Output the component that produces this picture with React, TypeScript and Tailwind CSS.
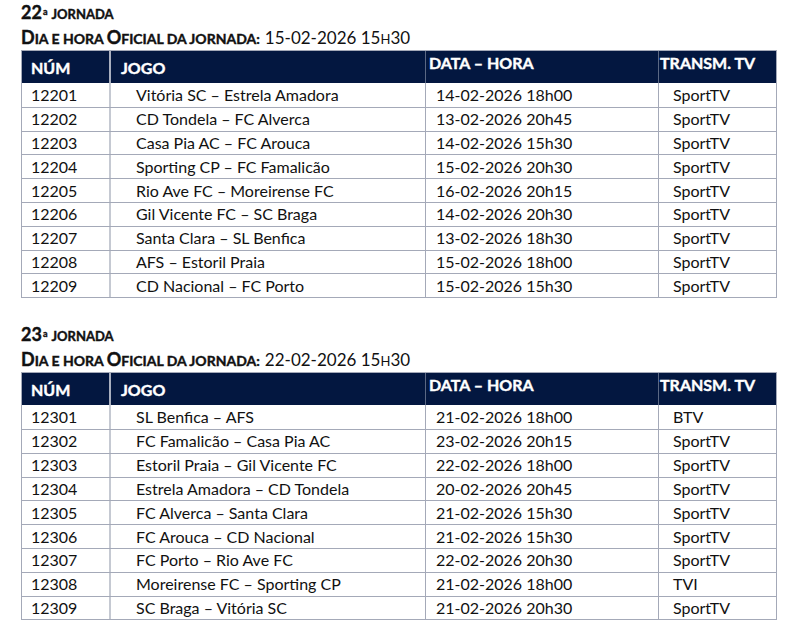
import React from "react";

type Jogo = { num: string; jogo: string; data: string; tv: string };

const jornadas: { n: string; dia: string; hora: string; jogos: Jogo[] }[] = [
  {
    n: "22",
    dia: "15-02-2026",
    hora: "30",
    jogos: [
      { num: "12201", jogo: "Vitória SC – Estrela Amadora", data: "14-02-2026 18h00", tv: "SportTV" },
      { num: "12202", jogo: "CD Tondela – FC Alverca", data: "13-02-2026 20h45", tv: "SportTV" },
      { num: "12203", jogo: "Casa Pia AC – FC Arouca", data: "14-02-2026 15h30", tv: "SportTV" },
      { num: "12204", jogo: "Sporting CP – FC Famalicão", data: "15-02-2026 20h30", tv: "SportTV" },
      { num: "12205", jogo: "Rio Ave FC – Moreirense FC", data: "16-02-2026 20h15", tv: "SportTV" },
      { num: "12206", jogo: "Gil Vicente FC – SC Braga", data: "14-02-2026 20h30", tv: "SportTV" },
      { num: "12207", jogo: "Santa Clara – SL Benfica", data: "13-02-2026 18h30", tv: "SportTV" },
      { num: "12208", jogo: "AFS – Estoril Praia", data: "15-02-2026 18h00", tv: "SportTV" },
      { num: "12209", jogo: "CD Nacional – FC Porto", data: "15-02-2026 15h30", tv: "SportTV" },
    ],
  },
  {
    n: "23",
    dia: "22-02-2026",
    hora: "30",
    jogos: [
      { num: "12301", jogo: "SL Benfica – AFS", data: "21-02-2026 18h00", tv: "BTV" },
      { num: "12302", jogo: "FC Famalicão – Casa Pia AC", data: "23-02-2026 20h15", tv: "SportTV" },
      { num: "12303", jogo: "Estoril Praia – Gil Vicente FC", data: "22-02-2026 18h00", tv: "SportTV" },
      { num: "12304", jogo: "Estrela Amadora – CD Tondela", data: "20-02-2026 20h45", tv: "SportTV" },
      { num: "12305", jogo: "FC Alverca – Santa Clara", data: "21-02-2026 15h30", tv: "SportTV" },
      { num: "12306", jogo: "FC Arouca – CD Nacional", data: "21-02-2026 15h30", tv: "SportTV" },
      { num: "12307", jogo: "FC Porto – Rio Ave FC", data: "22-02-2026 20h30", tv: "SportTV" },
      { num: "12308", jogo: "Moreirense FC – Sporting CP", data: "21-02-2026 18h00", tv: "TVI" },
      { num: "12309", jogo: "SC Braga – Vitória SC", data: "21-02-2026 20h30", tv: "SportTV" },
    ],
  },
];

function Jornada({ n, dia, hora, jogos }: (typeof jornadas)[number]) {
  return (
    <section className="pl-[21px] w-[777px]">
      <div className="h-[24px] flex items-end pb-[3px] font-bold [-webkit-text-stroke:0.4px_#111] text-[#111]">
        <span className="text-[18px] leading-none">{n}</span>
        <span className="text-[9px] leading-none self-start mt-[7px] ml-[1px]">a</span>
        <span className="text-[13px] leading-none ml-[4px]">JORNADA</span>
      </div>
      <div className="h-[26px] flex items-end pb-[4px] text-[#111] leading-none">
        <span className="font-bold [-webkit-text-stroke:0.4px_#111] text-[18px]">D</span>
        <span className="font-bold [-webkit-text-stroke:0.4px_#111] text-[14px]">IA E HORA&nbsp;</span>
        <span className="font-bold [-webkit-text-stroke:0.4px_#111] text-[18px]">O</span>
        <span className="font-bold [-webkit-text-stroke:0.4px_#111] text-[14px]">FICIAL DA JORNADA:</span>
        <span className="text-[17px] ml-[5px]">{dia} 15</span>
        <span className="text-[13px]">H</span>
        <span className="text-[17px]">{hora}</span>
      </div>
      <div className="border border-[#a4a9b8]">
        <div className="flex h-[32px] bg-[#031740] text-white font-bold [-webkit-text-stroke:0.4px_#fff] text-[16px]">
          <div className="w-[89px] pl-[9px] pt-[5px] border-r-2 border-[#a9afbf]">NÚM</div>
          <div className="w-[315px] pl-[10px] pt-[5px] border-r border-[#5b6884]">JOGO</div>
          <div className="w-[233px] pl-[3px] pt-[0px] border-r border-[#5b6884]">DATA – HORA</div>
          <div className="flex-1 pl-[1px] pt-[0px]">TRANSM. TV</div>
        </div>
        {jogos.map((j, i) => (
          <div
            key={j.num}
            className={`flex h-[23.8px] items-center text-[16px] text-[#111] ${i > 0 ? "border-t border-[#a4a9b8]" : ""}`}
          >
            <div className="w-[89px] h-full flex items-center pl-[9px] border-r-2 border-[#c5c9d2]">{j.num}</div>
            <div className="w-[315px] h-full flex items-center pl-[25px] border-r border-[#a4a9b8]">{j.jogo}</div>
            <div className="w-[233px] h-full flex items-center pl-[10px] border-r border-[#a4a9b8]">{j.data}</div>
            <div className="flex-1 h-full flex items-center pl-[14px]">{j.tv}</div>
          </div>
        ))}
      </div>
    </section>
  );
}

export default function App() {
  return (
    <div className="w-[787px] h-[630px] bg-white overflow-hidden font-['Lato','Noto_Sans',sans-serif] flex flex-col gap-[24px]">
      {jornadas.map((j) => (
        <Jornada key={j.n} {...j} />
      ))}
    </div>
  );
}
